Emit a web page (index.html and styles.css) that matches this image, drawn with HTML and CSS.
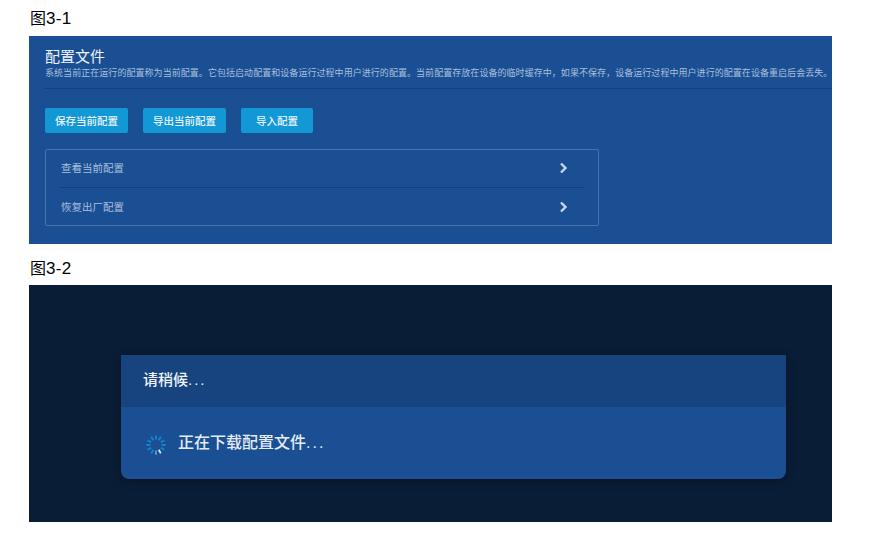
FILE: index.html
```html
<!DOCTYPE html>
<html lang="zh-CN">
<head>
    <meta charset="UTF-8">
    <meta name="viewport" content="width=device-width, initial-scale=1.0">
    <title>配置文件</title>
    <link rel="stylesheet" href="styles.css">
</head>
<body>
    <p class="caption">图<span class="caption-num">3-1</span></p>
    <div class="panel">
        <div class="panel-head">
            <h1>配置文件</h1>
            <p>系统当前正在运行的配置称为当前配置。它包括启动配置和设备运行过程中用户进行的配置。当前配置存放在设备的临时缓存中，如果不保存，设备运行过程中用户进行的配置在设备重启后会丢失。</p>
        </div>
        <div class="actions">
            <button class="btn">保存当前配置</button>
            <button class="btn">导出当前配置</button>
            <button class="btn btn-short">导入配置</button>
        </div>
        <div class="list">
            <div class="list-row">
                <span>查看当前配置</span>
                <svg class="chevron" width="9" height="12" viewBox="0 0 9 12"><path d="M2 1.5 L6.5 6 L2 10.5" fill="none" stroke="#c9d6ea" stroke-width="2.4"/></svg>
            </div>
            <div class="list-row">
                <span>恢复出厂配置</span>
                <svg class="chevron" width="9" height="12" viewBox="0 0 9 12"><path d="M2 1.5 L6.5 6 L2 10.5" fill="none" stroke="#c9d6ea" stroke-width="2.4"/></svg>
            </div>
        </div>
    </div>

    <p class="caption caption-second">图<span class="caption-num">3-2</span></p>
    <div class="overlay">
        <div class="dialog">
            <div class="dialog-head">请稍候<span class="dots">...</span></div>
            <div class="dialog-body">
                <svg class="spinner" width="22" height="22" viewBox="0 0 24 24">
                    <g stroke="#1487cc" stroke-width="2" stroke-linecap="butt">
                        <path d="M12 1.5V6"/>
                        <path d="M17.2 2.9L15 6.8"/>
                        <path d="M21.1 6.8L17.2 9"/>
                        <path d="M22.5 12H18"/>
                        <path d="M21.1 17.2L17.2 15"/>
                        <path d="M6.8 21.1L9 17.2"/>
                        <path d="M2.9 17.2L6.8 15"/>
                        <path d="M1.5 12H6"/>
                        <path d="M2.9 6.8L6.8 9"/>
                        <path d="M6.8 2.9L9 6.8"/>
                    </g>
                    <path d="M15 17.2L17.2 21.1" stroke="#dfe8f4" stroke-width="2"/>
                    <path d="M12 18V22.5" stroke="#5f9ad0" stroke-width="2"/>
                </svg>
                <span>正在下载配置文件<span class="dots">...</span></span>
            </div>
        </div>
    </div>
</body>
</html>
```

FILE: styles.css
```css
body {
    margin: 0;
    padding: 0 40px 11px 29px;
    background-color: white;
    font-family: "Liberation Sans", "Noto Sans CJK SC", sans-serif;
}

.caption {
    margin: 0;
    padding: 9px 0 8px 1px;
    font-size: 16px;
    line-height: 19px;
    color: #000;
}

.caption-num {
    font-size: 17px;
    letter-spacing: 0.3px;
}

.caption-second {
    padding: 15px 0 7px 1px;
}

.panel {
    height: 208px;
    background-color: #1b4f94;
    overflow: hidden;
}

.panel-head {
    margin-left: 16px;
    padding-top: 12px;
    height: 40px;
    border-bottom: 1px solid #17407a;
}

.panel-head h1 {
    margin: 0;
    font-size: 15px;
    line-height: 18px;
    font-weight: normal;
    color: #eef3fa;
}

.panel-head p {
    margin: 1px 0 0;
    font-size: 9px;
    line-height: 13px;
    letter-spacing: 0.05px;
    white-space: nowrap;
    color: #a9bfdc;
}

.actions {
    display: flex;
    gap: 15px;
    margin: 19px 0 16px 16px;
}

.btn {
    width: 83px;
    height: 25px;
    padding: 0;
    background-color: #1398d6;
    border: none;
    border-radius: 2px;
    font-family: inherit;
    font-size: 10.5px;
    font-weight: 500;
    color: #e8f4fb;
}

.btn-short {
    width: 72px;
}

.list {
    width: 552px;
    height: 75px;
    margin-left: 16px;
    border: 1px solid #4a72ad;
    border-radius: 2px;
}

.list-row {
    display: flex;
    justify-content: space-between;
    align-items: center;
    height: 37px;
    box-sizing: border-box;
    margin: 0 13px 0 14px;
    padding: 0 17px 1px 1px;
    font-size: 10.5px;
    color: #a9bfdc;
}

.list-row span {
    margin-bottom: 2px;
}

.list-row + .list-row {
    height: 38px;
    padding-bottom: 0;
    border-top: 1px solid #17407a;
}

.list-row + .list-row span {
    margin-bottom: 0;
}

.chevron {
    display: block;
}

.overlay {
    height: 237px;
    padding: 70px 46px 0 92px;
    box-sizing: border-box;
    background-color: #0a1d37;
}

.dialog {
    height: 124px;
    background-color: #1b4f94;
    border-radius: 0 0 8px 8px;
    box-shadow: 0 2px 8px rgba(0,0,0,0.35);
    overflow: hidden;
}

.dialog-head {
    height: 52px;
    padding-left: 22px;
    box-sizing: border-box;
    background-color: #17437f;
    font-size: 15px;
    font-weight: 500;
    line-height: 50px;
    color: #eef3fa;
}

.dialog-body {
    display: flex;
    align-items: flex-start;
    gap: 11px;
    padding: 24px 0 0 22px;
    font-size: 16px;
    font-weight: 500;
    line-height: 24px;
    color: #e4eaf3;
}

.spinner {
    margin: 3px 0 0 2px;
}

.dots {
    font-weight: normal;
    letter-spacing: 2px;
}
```
